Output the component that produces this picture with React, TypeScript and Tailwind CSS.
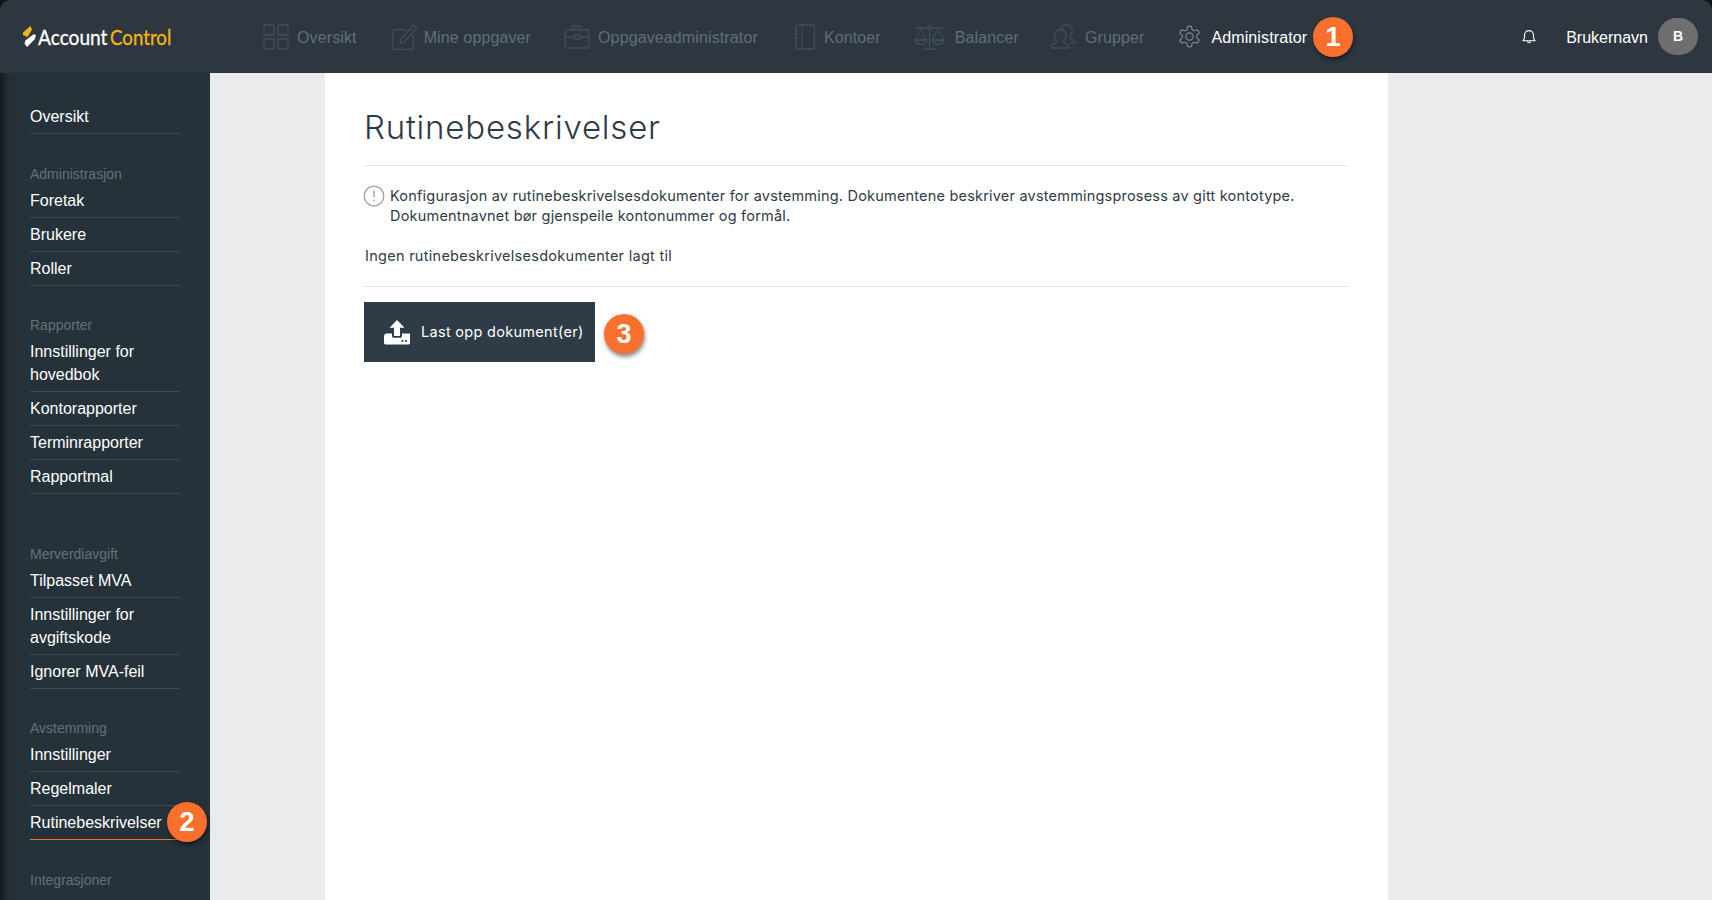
import React from "react";

const stroke = { fill: "none", stroke: "#414e59", strokeWidth: 1.3 } as const;

function IconGrid() {
  return (
    <svg width="26" height="26" viewBox="0 0 26 26" {...stroke}>
      <rect x="1" y="1" width="10" height="10" rx="0.8" />
      <rect x="15" y="1" width="10" height="10" rx="0.8" />
      <rect x="1" y="15" width="10" height="10" rx="0.8" />
      <rect x="15" y="15" width="10" height="10" rx="0.8" />
    </svg>
  );
}
function IconEdit() {
  return (
    <svg width="26" height="26" viewBox="0 0 26 26" {...stroke}>
      <path d="M14 5.500H1.500a.7.7 0 0 0-.7.7v18.600c0 .4.3.7.7.7h19a.7.7 0 0 0 .7-.7V11" />
      <path d="M8 19.500l1.200-4.700L21.500 1.200l3.400 2.600L12.400 17.600z" />
    </svg>
  );
}
function IconCase() {
  return (
    <svg width="26" height="24" viewBox="0 0 26 24" {...stroke}>
      <rect x="1" y="5" width="24" height="18" rx="1" />
      <path d="M9 5V2a1 1 0 0 1 1-1h6a1 1 0 0 1 1 1v3" />
      <path d="M1 12h9.500M15.500 12H25" />
      <rect x="10.500" y="10" width="5" height="4" rx="0.5" />
    </svg>
  );
}
function IconBook() {
  return (
    <svg width="22" height="26" viewBox="0 0 22 26" {...stroke}>
      <rect x="2" y="1" width="18.500" height="24" rx="1.400" />
      <path d="M8 1v24" strokeWidth="0.9" />
      <path d="M0.500 6h3M0.500 10h3M0.500 14h3M0.500 18h3" />
    </svg>
  );
}
function IconScale() {
  return (
    <svg width="31" height="26" viewBox="0 0 31 26" {...stroke}>
      <circle cx="15.500" cy="3" r="1.700" />
      <path d="M15.500 5v19M9 25h13M1 4h12.800M17.200 4H30" />
      <path d="M7 5L1.200 16h11.600zM24 5l-5.800 11h11.600z" strokeWidth="1" />
      <path d="M1.200 16c.6 3 3 4.500 5.800 4.500s5.200-1.500 5.800-4.500zM18.200 16c.6 3 3 4.500 5.800 4.500s5.200-1.500 5.800-4.500z" />
    </svg>
  );
}
function IconUsers() {
  return (
    <svg width="26" height="26" viewBox="0 0 26 26" {...stroke}>
      <path d="M10.500 5.500c3.800 0 5.700 3 5.500 6.200-.2 2.500-1.300 4-2.200 5-.4 1 .1 2 1.500 2.700 2 1 3.600 1.300 3.800 3.300.1.800-.3 1.300-1 1.300H2.400c-.8 0-1.300-.5-1.200-1.300.3-2 1.800-2.300 3.800-3.300 1.400-.7 1.900-1.700 1.500-2.700-.9-1-2-2.500-2.200-5-.2-3.200 2.400-6.200 6.200-6.200z" />
      <path d="M10.500 5C11.500 2.200 14 1 16.500 1c4 0 6 3 5.700 6.500-.2 2.300-1.200 3.700-2.100 4.700-.4 1 .2 2 1.500 2.600 1.800.9 3.200 1.300 3.400 3 .1.600-.2 1.200-1 1.200h-3.500" />
    </svg>
  );
}
function IconGear({ color }: { color: string }) {
  return (
    <svg width="25" height="25" viewBox="0 0 24 24" fill="none" stroke={color} strokeWidth="1.1" strokeLinejoin="round">
      <path d="M12.220 2h-.44a2 2 0 0 0-2 2v.18a2 2 0 0 1-1 1.730l-.43.250a2 2 0 0 1-2 0l-.15-.080a2 2 0 0 0-2.730.730l-.22.380a2 2 0 0 0 .730 2.730l.15.100a2 2 0 0 1 1 1.720v.510a2 2 0 0 1-1 1.740l-.15.090a2 2 0 0 0-.730 2.730l.22.380a2 2 0 0 0 2.730.730l.15-.080a2 2 0 0 1 2 0l.43.250a2 2 0 0 1 1 1.730V20a2 2 0 0 0 2 2h.44a2 2 0 0 0 2-2v-.18a2 2 0 0 1 1-1.730l.43-.250a2 2 0 0 1 2 0l.15.080a2 2 0 0 0 2.730-.730l.22-.390a2 2 0 0 0-.730-2.730l-.15-.080a2 2 0 0 1-1-1.740v-.5a2 2 0 0 1 1-1.740l.15-.090a2 2 0 0 0 .730-2.730l-.22-.380a2 2 0 0 0-2.730-.730l-.15.080a2 2 0 0 1-2 0l-.43-.250a2 2 0 0 1-1-1.730V4a2 2 0 0 0-2-2z" />
      <circle cx="12" cy="12" r="3.500" />
    </svg>
  );
}
function IconBell() {
  return (
    <svg width="14" height="15" viewBox="0 0 14 15" fill="none" stroke="#ffffff" strokeWidth="1.1" strokeLinejoin="round">
      <path d="M1 11.700c1.100-1 1.500-2 1.500-3.700V6.200C2.500 3.500 4.500 1.600 7 1.600s4.500 1.900 4.500 4.600V8c0 1.700.4 2.700 1.500 3.700z" />
      <path d="M5.500 12.200c.1 1 .7 1.600 1.500 1.600s1.400-.6 1.500-1.600" />
    </svg>
  );
}
function IconUpload() {
  return (
    <svg width="26" height="25" viewBox="0 0 26 25" fill="#ffffff">
      <path d="M13 0l7.500 7.800H16V16h-6V7.800H5.500z" />
      <path d="M8 13.500v2.500c0 1 .8 1.800 1.800 1.800h6.400c1 0 1.800-.8 1.800-1.800v-2.500H26V23a2 2 0 0 1-1.500 1.500h-23A2 2 0 0 1 0 23v-6.500c0-1.500 1-3 2-3z" />
      <circle cx="18.500" cy="21" r="1.100" fill="#2f3b46" />
      <circle cx="22" cy="21" r="1.100" fill="#2f3b46" />
    </svg>
  );
}
function IconInfo() {
  return (
    <svg width="22" height="22" viewBox="0 0 22 22" fill="none">
      <circle cx="11" cy="11" r="9.800" stroke="#9aa1ad" strokeWidth="1.300" />
      <path d="M11 5.800v6.400" stroke="#9aa1ad" strokeWidth="1.400" />
      <circle cx="11" cy="15.300" r="0.900" fill="#9aa1ad" />
    </svg>
  );
}
function Logo() {
  return (
    <div className="flex items-center">
      <svg width="15" height="22" viewBox="0 0 15 22" className="mr-[1px]">
        <path d="M1 6.500L8.500 0l1.500 3.500-4.500 7.500L1 9z" fill="#f2b417" />
        <path d="M14 9.500l-2-1.500-8.500 6.500-1 3L5 21l7.500-7.500z" fill="#ffffff" />
      </svg>
      <span className="inline-block w-[72px] origin-left scale-x-[0.91] text-[21px] leading-none text-white font-['Lato',sans-serif] [-webkit-text-stroke:0.3px_#ffffff]">Account</span>
      <span className="inline-block origin-left scale-x-[0.89] text-[21px] leading-none text-[#f2b417] font-['Lato',sans-serif] [-webkit-text-stroke:0.3px_#f2b417]">Control</span>
    </div>
  );
}

function Badge({ n, className }: { n: number; className: string }) {
  return (
    <div className={"absolute flex h-10 w-10 items-center justify-center rounded-full bg-[#f96f2e] text-[27px] font-bold leading-none text-white font-['Liberation_Sans',sans-serif] shadow-[1px_3px_4px_rgba(0,0,0,0.45)] " + className}>
      {n}
    </div>
  );
}

const navItems = [
  { icon: <IconGrid />, label: "Oversikt", gap: "gap-[8px]", ml: "" },
  { icon: <IconEdit />, label: "Mine oppgaver", gap: "gap-[6px]", ml: "ml-[35px]" },
  { icon: <IconCase />, label: "Oppgaveadministrator", gap: "gap-[8px]", ml: "ml-[33px]" },
  { icon: <IconBook />, label: "Kontoer", gap: "gap-[8px]", ml: "ml-[36px]" },
  { icon: <IconScale />, label: "Balancer", gap: "gap-[10px]", ml: "ml-[33px]" },
  { icon: <IconUsers />, label: "Grupper", gap: "gap-[9px]", ml: "ml-[31px]" },
];

function NavRow({ label, active }: { label: string; active?: boolean }) {
  return (
    <div className={"border-b py-[5px] text-[16px] leading-[23px] text-white " + (active ? "border-[#f96f2e]" : "border-[#3d4b56]")}>
      {label}
    </div>
  );
}

function Section({ title, items, className }: { title?: string; items: string[]; className?: string }) {
  return (
    <div className={className}>
      {title && <div className="h-[19px] text-[14px] leading-[18px] text-[#63717d]">{title}</div>}
      {items.map((t) => (
        <NavRow key={t} label={t} active={t === "Rutinebeskrivelser"} />
      ))}
    </div>
  );
}

export default function App() {
  return (
    <div className="h-[900px] w-[1712px] overflow-hidden bg-[#10151a] font-['Liberation_Sans',sans-serif]">
      <div className="relative flex h-full flex-col overflow-hidden rounded-t-[10px]">
        <header className="flex h-[73px] shrink-0 items-center bg-[#2e3740] pl-[22px] pr-[14px]">
          <div className="w-[241px]">
            <Logo />
          </div>
          <nav className="flex items-center">
            {navItems.map((n) => (
              <div key={n.label} className={"flex items-center " + n.gap + " " + n.ml}>
                {n.icon}
                <span className="pt-[2px] text-[16px] tracking-[0.12px] text-[#5f6e7a]">{n.label}</span>
              </div>
            ))}
            <div className="ml-[33px] flex items-center gap-[9px]">
              <IconGear color="#7f8a94" />
              <span className="pt-[2px] text-[16px] tracking-[0.12px] text-white">Administrator</span>
            </div>
          </nav>
          <div className="ml-auto flex items-center">
            <IconBell />
            <span className="ml-[30px] pt-[2px] text-[16px] text-white">Brukernavn</span>
            <div className="ml-[10px] flex h-[37px] w-10 items-center justify-center rounded-full bg-[#6f6f6f] text-[14px] font-bold text-white">B</div>
          </div>
        </header>
        <Badge n={1} className="left-[1313px] top-[17px]" />

        <div className="flex min-h-0 flex-1">
          <aside className="relative w-[210px] shrink-0 overflow-hidden bg-[linear-gradient(90deg,#141b20_0px,#232e35_8px,#263239_18px)] px-[30px] pt-[27px]">
            <Section items={["Oversikt"]} />
            <Section className="mt-[31px]" title="Administrasjon" items={["Foretak", "Brukere", "Roller"]} />
            <Section className="mt-[30px]" title="Rapporter" items={["Innstillinger for hovedbok", "Kontorapporter", "Terminrapporter", "Rapportmal"]} />
            <Section className="mt-[51px]" title="Merverdiavgift" items={["Tilpasset MVA", "Innstillinger for avgiftskode", "Ignorer MVA-feil"]} />
            <Section className="mt-[30px]" title="Avstemming" items={["Innstillinger", "Regelmaler", "Rutinebeskrivelser"]} />
            <Section className="mt-[31px]" title="Integrasjoner" items={[]} />
          </aside>
          <main className="flex-1 overflow-hidden bg-[#e9ebed] pl-[115px]">
            <div className="h-full w-[1063px] bg-white pl-[39px] pr-[40px] pt-[33px] text-[#2f3b46] font-['Inter',sans-serif]">
              <h1 className="border-b border-[#e6e8ea] pb-[17px] text-[33px] font-light leading-[42px] tracking-[0.8px] text-[#2f3b46]">Rutinebeskrivelser</h1>
              <div className="mt-[20px] flex">
                <div className="-ml-[1px] mt-[-1px] w-[27px] shrink-0">
                  <IconInfo />
                </div>
                <p className="text-[14.5px] leading-[20px] tracking-[0.2px]">
                  Konfigurasjon av rutinebeskrivelsesdokumenter for avstemming. Dokumentene beskriver avstemmingsprosess av gitt kontotype.
                  <br />
                  Dokumentnavnet bør gjenspeile kontonummer og formål.
                </p>
              </div>
              <div className="mt-[20px] border-b border-[#e3e5e7] pb-[20px] text-[14.5px] leading-[20px] tracking-[0.28px]">
                <p className="pl-[1px]">Ingen rutinebeskrivelsesdokumenter lagt til</p>
              </div>
              <div className="mt-[15px] flex h-[60px] w-[231px] items-center bg-[#2f3b46] pl-[20px] text-[14.5px] tracking-[0.3px] text-white">
                <IconUpload />
                <span className="ml-[11px] pb-[1px]">Last opp dokument(er)</span>
              </div>
            </div>
          </main>
        </div>
        <Badge n={2} className="left-[167px] top-[802px]" />
        <Badge n={3} className="left-[604px] top-[314px]" />
      </div>
    </div>
  );
}
